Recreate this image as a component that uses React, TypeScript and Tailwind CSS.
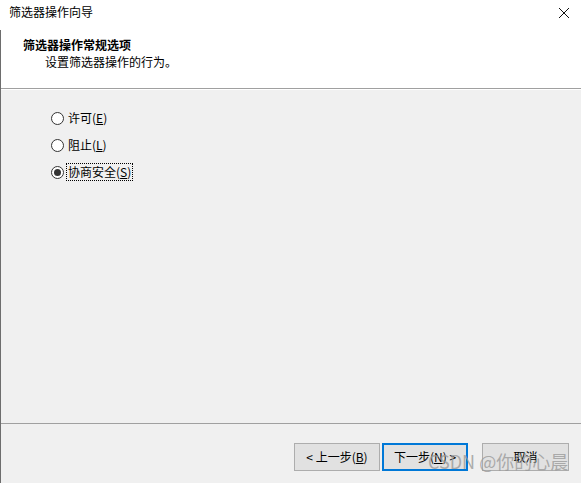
import { useState } from "react";

const font = { fontFamily: '"Noto Sans CJK SC", "Noto Sans", sans-serif' };

const options = [
    { id: 'permit', label: '许可', key: 'E' },
    { id: 'block', label: '阻止', key: 'L' },
    { id: 'negotiate', label: '协商安全', key: 'S' },
];

const Radio = ({ checked }: { checked: boolean }) => (
    <span className="w-[13px] h-[13px] rounded-full border border-[#333] bg-white flex items-center justify-center shrink-0">
        {checked && <span className="w-[7px] h-[7px] rounded-full bg-[#333]" />}
    </span>
);

const App = () => {
    const [selected, setSelected] = useState('negotiate');

    return (
        <div className="w-[581px] h-[483px] bg-white flex flex-col text-[12px] text-black overflow-hidden relative" style={font}>
            {/* title bar */}
            <div className="h-[30px] flex items-center justify-between pl-[9px] pr-[9px] shrink-0">
                <span className="-mt-[6px]">筛选器操作向导</span>
                <svg width="12" height="12" viewBox="0 0 12 12" className="mr-[2px] -mt-[5px]">
                    <path d="M1 1 L11 11 M11 1 L1 11" stroke="#111" strokeWidth="1" />
                </svg>
            </div>

            <div className="flex-1 flex flex-col border-l border-[#6d6d6d]">
                {/* header */}
                <div className="h-[58px] bg-white pl-[22px] pt-[6px] shrink-0">
                    <div className="font-bold leading-[18px]">筛选器操作常规选项</div>
                    <div className="pl-[22px] leading-[16px]">设置筛选器操作的行为。</div>
                </div>
                <div className="h-px bg-[#a0a0a0]" />
                <div className="h-px bg-white" />

                {/* body */}
                <div className="flex-1 bg-[#f0f0f0] pl-[50px] pt-[19px] flex flex-col gap-[9px]">
                    {options.map(opt => (
                        <label key={opt.id} className="flex items-center gap-[3px] h-[18px] cursor-default" onClick={() => setSelected(opt.id)}>
                            <Radio checked={selected === opt.id} />
                            <span className={`leading-[16px] px-px ${selected === opt.id ? 'outline outline-1 outline-dotted outline-black' : ''}`}>
                                {opt.label}(<span className="underline">{opt.key}</span>)
                            </span>
                        </label>
                    ))}
                </div>

                <div className="h-px bg-[#a0a0a0]" />
                <div className="h-px bg-[#f0f0f0]" />

                {/* footer */}
                <div className="h-[58px] bg-[#f0f0f0] flex items-start pt-[18px] pl-[293px] shrink-0">
                    <button className="w-[86px] h-[28px] border border-[#adadad] bg-[#e1e1e1] flex items-center justify-center">
                        &lt; 上一步(<span className="underline">B</span>)
                    </button>
                    <button className="w-[86px] h-[28px] ml-[2px] border-2 border-[#0078d7] bg-[#e1e1e1] flex items-center justify-center">
                        下一步(<span className="underline">N</span>) &gt;
                    </button>
                    <button className="w-[87px] h-[28px] ml-[14px] border border-[#adadad] bg-[#e1e1e1] flex items-center justify-center">
                        取消
                    </button>
                </div>
            </div>

            {/* watermark */}
            <div className="absolute left-[428px] top-[449px] text-[18px] text-[#9a9a9a]/80 leading-[24px] pointer-events-none">
                CSDN @你的心晨
            </div>
        </div>
    );
};

export default App;
